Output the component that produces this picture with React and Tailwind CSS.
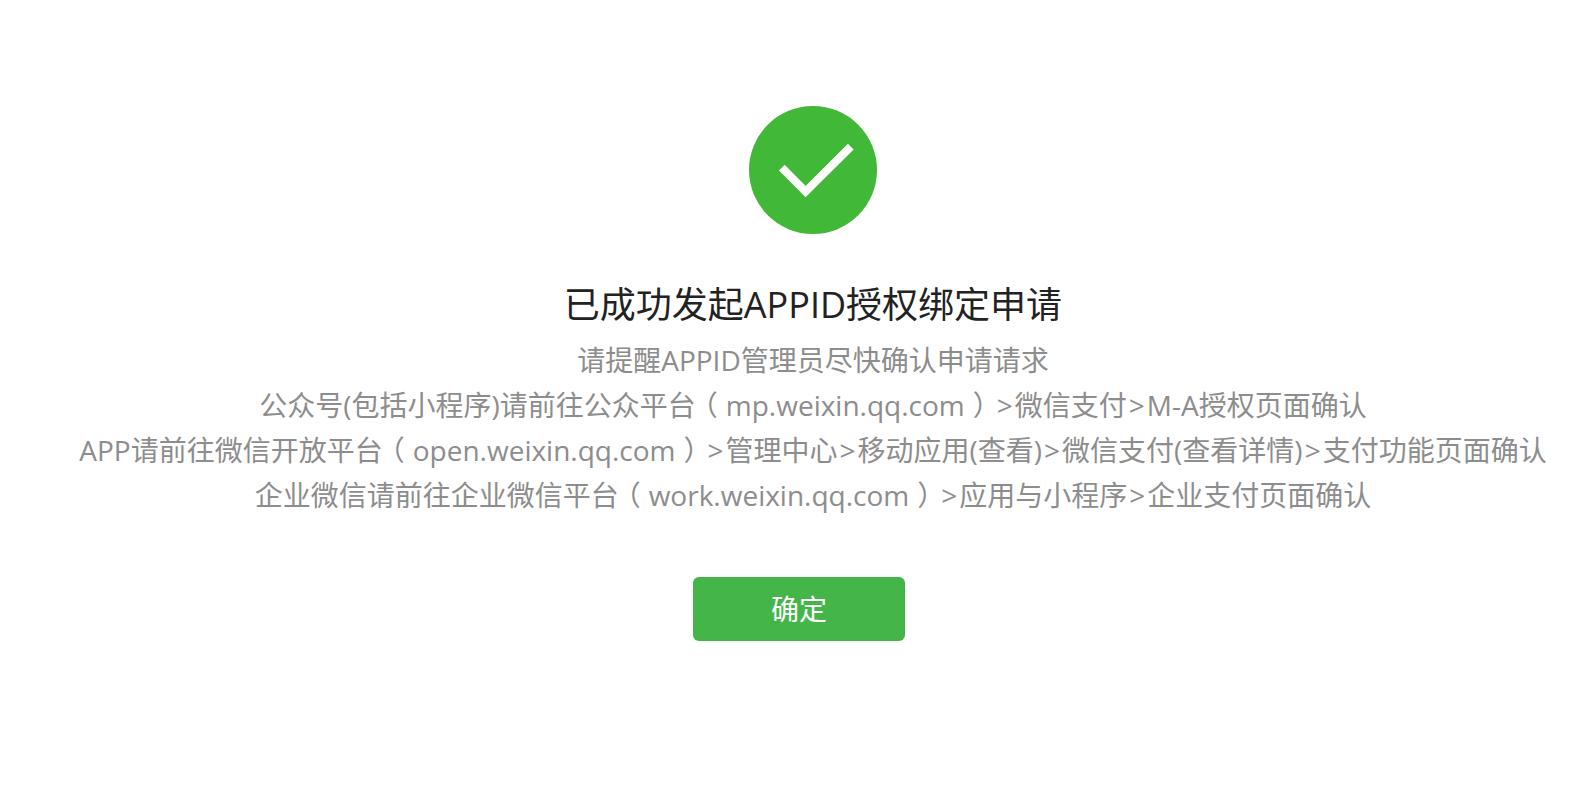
const platforms = [
  {
    intro: '公众号(包括小程序)请前往公众平台',
    host: 'mp.weixin.qq.com',
    path: ['微信支付', 'M-A授权页面确认'],
  },
  {
    intro: 'APP请前往微信开放平台',
    host: 'open.weixin.qq.com',
    path: ['管理中心', '移动应用(查看)', '微信支付(查看详情)', '支付功能页面确认'],
  },
  {
    intro: '企业微信请前往企业微信平台',
    host: 'work.weixin.qq.com',
    path: ['应用与小程序', '企业支付页面确认'],
  },
];

function SuccessIcon() {
  return (
    <svg className="w-32 h-32" viewBox="0 0 128 128" fill="none" aria-hidden="true">
      <circle cx="64" cy="64" r="64" fill="#41b838" />
      <path d="M32.8 61.6L56.6 85.6L101.8 40.6" stroke="#fff" strokeWidth="8" />
    </svg>
  );
}

// Half-width form of the full-width bracket, with equal space on both sides
function Bracket({ children }) {
  return <span className="px-2 [font-feature-settings:'halt']">{children}</span>;
}

function PlatformLine({ intro, host, path }) {
  return (
    <p className="whitespace-nowrap">
      {intro}
      <Bracket>（</Bracket>
      {host}
      <Bracket>）</Bracket>
      {path.map((step) => (
        <span key={step}>
          <span className="px-0.5">&gt;</span>
          {step}
        </span>
      ))}
    </p>
  );
}

function App() {
  return (
    <main className="min-h-screen bg-white pt-[106px] font-['Open_Sans','Noto_Sans_CJK_SC',sans-serif]">
      {/* Result message */}
      <section className="flex flex-col items-center pl-[42px] text-center">
        <SuccessIcon />
        <h1 className="mt-11 text-[36px] leading-[54px] text-[#222]">已成功发起APPID授权绑定申请</h1>
        <div className="mt-1.5 text-[28px] leading-[45px] text-[#8d8d8d]">
          <p>请提醒APPID管理员尽快确认申请请求</p>
          {platforms.map((platform) => (
            <PlatformLine key={platform.host} {...platform} />
          ))}
        </div>
      </section>

      {/* Confirm button */}
      <div className="mt-[59px] flex justify-center pl-[14px]">
        <button type="button" className="h-16 w-[212px] rounded-md bg-[#44b549] text-[28px] text-white">
          确定
        </button>
      </div>
    </main>
  );
}

export default App;
